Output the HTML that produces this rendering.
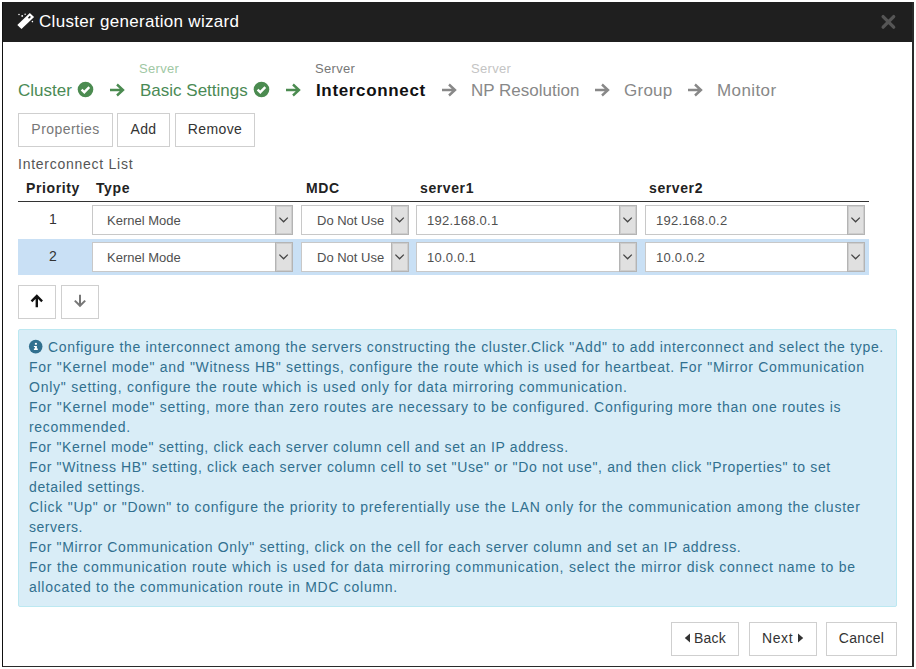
<!DOCTYPE html>
<html><head><meta charset="utf-8">
<style>
html,body{margin:0;padding:0;background:#fff;width:916px;height:669px;overflow:hidden;}
body{font-family:"Liberation Sans",sans-serif;position:relative;}
.a{position:absolute;white-space:nowrap;}
#dlg{position:absolute;left:2px;top:2px;width:909px;height:664px;border-left:1px solid #111;border-right:2px solid #2a2a2a;border-bottom:1px solid #2a2a2a;background:#fff;}
#title{position:absolute;left:0;top:0;width:909px;height:40px;background:#1f1f1f;}
.btn{position:absolute;box-sizing:border-box;border:1px solid #cfcfcf;background:#fff;color:#333;font-size:14px;text-align:center;}
.hdr{font-weight:bold;font-size:14px;color:#222;letter-spacing:0.6px;}
.sel{position:absolute;box-sizing:border-box;border:1px solid #c8c8c8;background:#fff;height:30px;font-size:13px;color:#505050;}
.sel .t{position:absolute;top:6.5px;white-space:nowrap;}
.sel .dd{position:absolute;right:-1px;top:-1px;bottom:-1px;width:18px;box-sizing:border-box;background:#e0e0e0;border:1px solid #b4b4b4;box-shadow:inset 0 0 0 1px #cdcdcd;}
.info{color:#31708f;font-size:14px;letter-spacing:0.69px;}
</style></head><body>
<div id="dlg">
  <div id="title"></div>
</div>
<!-- title -->
<svg class="a" style="left:0;top:0" width="40" height="40" viewBox="0 0 40 40">
  <path d="M29.8 12.9 L34.1 16.9 L21.5 29 L17.3 24.9 Z" fill="#fff"/>
  <path d="M29.05 18.79 L27.92 17.65 L29.75 15.82 L30.89 16.95 Z" fill="#1f1f1f"/>
  <circle cx="19" cy="14.4" r="0.75" fill="#fff"/><circle cx="22.2" cy="15.9" r="0.9" fill="#fff"/><circle cx="25.1" cy="14.2" r="0.75" fill="#fff"/><circle cx="32.4" cy="21.6" r="0.8" fill="#fff"/>
</svg>
<div class="a" style="left:39px;top:12px;font-size:17px;color:#fff;letter-spacing:0.3px">Cluster generation wizard</div>
<svg class="a" style="left:872px;top:8px" width="32" height="28" viewBox="0 0 32 28"><path d="M11.1 8.6 L21.7 19.2 M21.7 8.6 L11.1 19.2" stroke="#555" stroke-width="3.3" stroke-linecap="round"/></svg>

<!-- steps -->
<div class="a" style="left:139px;top:61px;font-size:13px;letter-spacing:0.3px;color:#9fc8a4">Server</div>
<div class="a" style="left:315px;top:61px;font-size:13px;letter-spacing:0.3px;color:#777">Server</div>
<div class="a" style="left:471px;top:61px;font-size:13px;letter-spacing:0.3px;color:#c4c4c4">Server</div>

<div class="a" style="left:18px;top:81px;font-size:17px;color:#4a8a55">Cluster</div>
<svg class="a" style="left:77px;top:81.3px" width="17" height="17" viewBox="0 0 17 17"><circle cx="8.5" cy="8.5" r="7.8" fill="#4b8b50"/><path d="M4.6 8.6 L7.3 11.2 L12.3 6.1" stroke="#fff" stroke-width="2.4" fill="none"/></svg>
<svg class="a" style="left:109px;top:83px" width="16" height="14" viewBox="0 0 16 14"><path d="M1 7 H14 M8 1.5 L14 7 L8 12.5" stroke="#4b8b50" stroke-width="2.4" fill="none"/></svg>
<div class="a" style="left:140px;top:81px;font-size:17px;color:#4a8a55">Basic Settings</div>
<svg class="a" style="left:253px;top:81.3px" width="17" height="17" viewBox="0 0 17 17"><circle cx="8.5" cy="8.5" r="7.8" fill="#4b8b50"/><path d="M4.6 8.6 L7.3 11.2 L12.3 6.1" stroke="#fff" stroke-width="2.4" fill="none"/></svg>
<svg class="a" style="left:285px;top:83px" width="16" height="14" viewBox="0 0 16 14"><path d="M1 7 H14 M8 1.5 L14 7 L8 12.5" stroke="#4b8b50" stroke-width="2.4" fill="none"/></svg>
<div class="a" style="left:316px;top:81px;font-size:17px;color:#111;font-weight:bold;letter-spacing:0.65px">Interconnect</div>
<svg class="a" style="left:441px;top:83px" width="16" height="14" viewBox="0 0 16 14"><path d="M1 7 H14 M8 1.5 L14 7 L8 12.5" stroke="#888" stroke-width="2.4" fill="none"/></svg>
<div class="a" style="left:471px;top:81px;font-size:17px;color:#888">NP Resolution</div>
<svg class="a" style="left:594px;top:83px" width="16" height="14" viewBox="0 0 16 14"><path d="M1 7 H14 M8 1.5 L14 7 L8 12.5" stroke="#888" stroke-width="2.4" fill="none"/></svg>
<div class="a" style="left:624px;top:81px;font-size:17px;color:#888;letter-spacing:0.25px">Group</div>
<svg class="a" style="left:687px;top:83px" width="16" height="14" viewBox="0 0 16 14"><path d="M1 7 H14 M8 1.5 L14 7 L8 12.5" stroke="#888" stroke-width="2.4" fill="none"/></svg>
<div class="a" style="left:717px;top:81px;font-size:17px;color:#888;letter-spacing:0.4px">Monitor</div>

<!-- toolbar buttons -->
<div class="btn" style="left:18px;top:113px;width:95px;height:34px;line-height:31px;color:#777;letter-spacing:0.45px">Properties</div>
<div class="btn" style="left:117px;top:113px;width:53px;height:34px;line-height:31px;letter-spacing:0.4px">Add</div>
<div class="btn" style="left:175px;top:113px;width:80px;height:34px;line-height:31px;letter-spacing:0.4px">Remove</div>

<div class="a" style="left:18px;top:156px;font-size:14px;color:#555;letter-spacing:0.74px">Interconnect List</div>

<!-- table header -->
<div class="a hdr" style="left:26px;top:180px">Priority</div>
<div class="a hdr" style="left:96px;top:180px">Type</div>
<div class="a hdr" style="left:306px;top:180px">MDC</div>
<div class="a hdr" style="left:420px;top:180px">server1</div>
<div class="a hdr" style="left:649px;top:180px">server2</div>
<div class="a" style="left:18px;top:201px;width:851px;height:1px;background:#333"></div>

<!-- row 1 -->
<div class="a" style="left:49px;top:211px;font-size:14px;color:#333">1</div>
<div class="sel" style="left:92px;top:205px;width:201px"><span class="t" style="left:14px">Kernel Mode</span><span class="dd"><svg width="16" height="28" viewBox="0 0 16 28" style="position:absolute;left:0;top:0"><path d="M3.4 11.6 L7.6 15.8 L11.8 11.6" stroke="#444" stroke-width="1.3" fill="none"/></svg></span></div>
<div class="sel" style="left:301px;top:205px;width:108px"><span class="t" style="left:15px">Do Not Use</span><span class="dd"><svg width="16" height="28" viewBox="0 0 16 28" style="position:absolute;left:0;top:0"><path d="M3.4 11.6 L7.6 15.8 L11.8 11.6" stroke="#444" stroke-width="1.3" fill="none"/></svg></span></div>
<div class="sel" style="left:416px;top:205px;width:221px"><span class="t" style="left:10px;letter-spacing:0.25px">192.168.0.1</span><span class="dd"><svg width="16" height="28" viewBox="0 0 16 28" style="position:absolute;left:0;top:0"><path d="M3.4 11.6 L7.6 15.8 L11.8 11.6" stroke="#444" stroke-width="1.3" fill="none"/></svg></span></div>
<div class="sel" style="left:645px;top:205px;width:220px"><span class="t" style="left:10px;letter-spacing:0.25px">192.168.0.2</span><span class="dd"><svg width="16" height="28" viewBox="0 0 16 28" style="position:absolute;left:0;top:0"><path d="M3.4 11.6 L7.6 15.8 L11.8 11.6" stroke="#444" stroke-width="1.3" fill="none"/></svg></span></div>

<!-- row 2 -->
<div class="a" style="left:18px;top:239px;width:851px;height:36px;background:#c9e0f5"></div>
<div class="a" style="left:49px;top:248px;font-size:14px;color:#333">2</div>
<div class="sel" style="left:92px;top:242px;width:201px"><span class="t" style="left:14px">Kernel Mode</span><span class="dd"><svg width="16" height="28" viewBox="0 0 16 28" style="position:absolute;left:0;top:0"><path d="M3.4 11.6 L7.6 15.8 L11.8 11.6" stroke="#444" stroke-width="1.3" fill="none"/></svg></span></div>
<div class="sel" style="left:301px;top:242px;width:108px"><span class="t" style="left:15px">Do Not Use</span><span class="dd"><svg width="16" height="28" viewBox="0 0 16 28" style="position:absolute;left:0;top:0"><path d="M3.4 11.6 L7.6 15.8 L11.8 11.6" stroke="#444" stroke-width="1.3" fill="none"/></svg></span></div>
<div class="sel" style="left:416px;top:242px;width:221px"><span class="t" style="left:10px;letter-spacing:0.25px">10.0.0.1</span><span class="dd"><svg width="16" height="28" viewBox="0 0 16 28" style="position:absolute;left:0;top:0"><path d="M3.4 11.6 L7.6 15.8 L11.8 11.6" stroke="#444" stroke-width="1.3" fill="none"/></svg></span></div>
<div class="sel" style="left:645px;top:242px;width:220px"><span class="t" style="left:10px;letter-spacing:0.25px">10.0.0.2</span><span class="dd"><svg width="16" height="28" viewBox="0 0 16 28" style="position:absolute;left:0;top:0"><path d="M3.4 11.6 L7.6 15.8 L11.8 11.6" stroke="#444" stroke-width="1.3" fill="none"/></svg></span></div>

<!-- up/down -->
<div class="btn" style="left:18px;top:285px;width:38px;height:34px"><svg width="36" height="32" viewBox="0 0 36 32" style="position:absolute;left:0;top:0"><path d="M17.8 21.2 V10 M12.5 15.3 L17.8 10 L23.1 15.3" stroke="#111" stroke-width="2.4" fill="none"/></svg></div>
<div class="btn" style="left:61px;top:285px;width:38px;height:34px"><svg width="36" height="32" viewBox="0 0 36 32" style="position:absolute;left:0;top:0"><path d="M18 8.7 V19.8 M12.8 14.6 L18 19.8 L23.2 14.6" stroke="#777" stroke-width="2" fill="none"/></svg></div>

<!-- info box -->
<div class="a" style="left:18px;top:329px;width:879px;height:278px;box-sizing:border-box;background:#d9edf7;border:1px solid #bce8f1;border-radius:2px"></div>
<svg class="a" style="left:26px;top:338px" width="20" height="18" viewBox="0 0 20 18"><circle cx="9.7" cy="8.6" r="6.8" fill="#31708f"/><rect x="8.9" y="4.9" width="2" height="1.8" fill="#fff"/><path d="M7.9 7.9 H10.9 V10.6 H11.8 V11.9 H7.9 V10.6 H8.9 V9.1 H7.9 Z" fill="#fff"/></svg>
<div class="a info" style="left:48px;top:339px;letter-spacing:0.685px">Configure the interconnect among the servers constructing the cluster.Click "Add" to add interconnect and select the type.</div>
<div class="a info" style="left:29px;top:359px;letter-spacing:0.707px">For "Kernel mode" and "Witness HB" settings, configure the route which is used for heartbeat. For "Mirror Communication</div>
<div class="a info" style="left:29px;top:379px;letter-spacing:0.75px">Only" setting, configure the route which is used only for data mirroring communication.</div>
<div class="a info" style="left:29px;top:399px;letter-spacing:0.705px">For "Kernel mode" setting, more than zero routes are necessary to be configured. Configuring more than one routes is</div>
<div class="a info" style="left:29px;top:419px;letter-spacing:0.7px">recommended.</div>
<div class="a info" style="left:29px;top:439px;letter-spacing:0.641px">For "Kernel mode" setting, click each server column cell and set an IP address.</div>
<div class="a info" style="left:29px;top:459px;letter-spacing:0.658px">For "Witness HB" setting, click each server column cell to set "Use" or "Do not use", and then click "Properties" to set</div>
<div class="a info" style="left:29px;top:479px;letter-spacing:0.62px">detailed settings.</div>
<div class="a info" style="left:29px;top:499px;letter-spacing:0.748px">Click "Up" or "Down" to configure the priority to preferentially use the LAN only for the communication among the cluster</div>
<div class="a info" style="left:29px;top:519px;letter-spacing:0.53px">servers.</div>
<div class="a info" style="left:29px;top:539px;letter-spacing:0.667px">For "Mirror Communication Only" setting, click on the cell for each server column and set an IP address.</div>
<div class="a info" style="left:29px;top:559px;letter-spacing:0.756px">For the communication route which is used for data mirroring communication, select the mirror disk connect name to be</div>
<div class="a info" style="left:29px;top:579px;letter-spacing:0.718px">allocated to the communication route in MDC column.</div>

<!-- footer buttons -->
<div class="btn" style="left:671px;top:622px;width:68px;height:34px;line-height:31px;text-align:left"><svg width="8" height="10" viewBox="0 0 8 10" style="position:absolute;left:11.5px;top:10.3px"><path d="M6 0.6 L0.8 5 L6 9.4 Z" fill="#333"/></svg><span style="position:absolute;left:22px;letter-spacing:0.2px">Back</span></div>
<div class="btn" style="left:749px;top:622px;width:68px;height:34px;line-height:31px;text-align:left"><span style="position:absolute;left:12px;letter-spacing:0.6px">Next</span><svg width="8" height="10" viewBox="0 0 8 10" style="position:absolute;left:47px;top:10.3px"><path d="M1 0.6 L6.2 5 L1 9.4 Z" fill="#333"/></svg></div>
<div class="btn" style="left:826px;top:622px;width:71px;height:34px;line-height:31px;letter-spacing:0.3px">Cancel</div>
</body></html>
